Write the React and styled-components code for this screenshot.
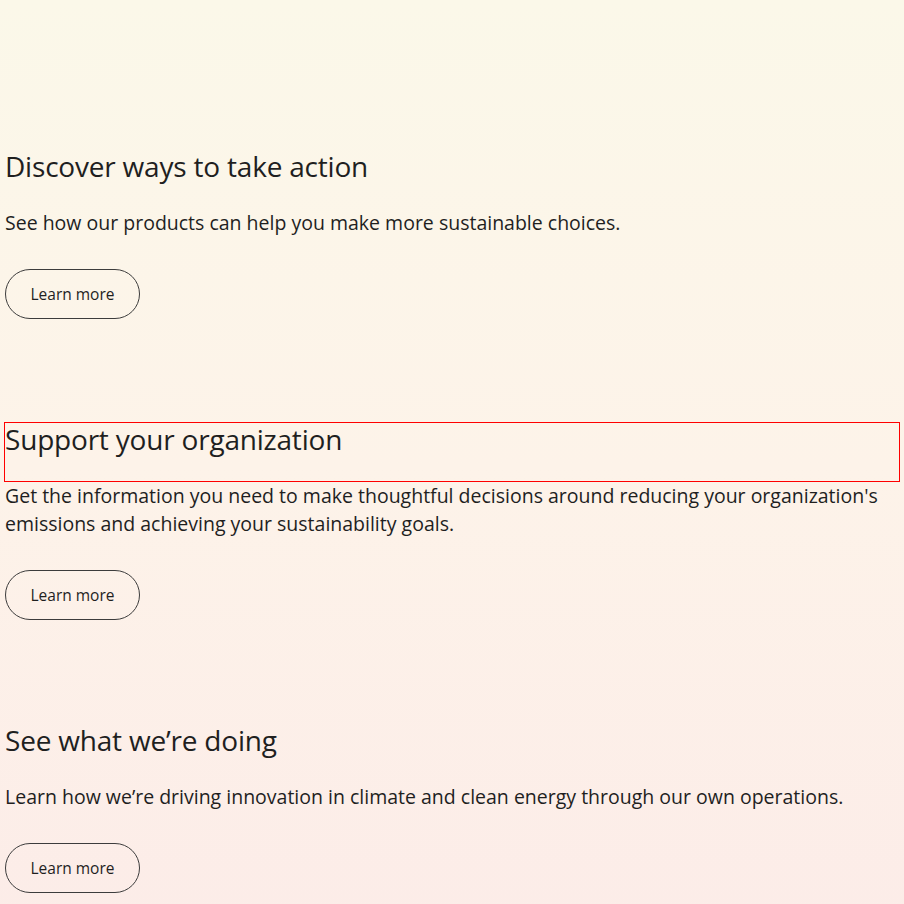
import styled, { createGlobalStyle } from 'styled-components';

const Global = createGlobalStyle`
  html, body {
    margin: 0;
    padding: 0;
  }
  body {
    min-height: 904px;
    background: linear-gradient(180deg, #fbf8e9 0%, #fdf3e9 50%, #fcece8 100%);
    font-family: "Open Sans", "Liberation Sans", sans-serif;
    color: #1f1f1f;
  }
`;

const Page = styled.main`
  display: flex;
  flex-direction: column;
  gap: 103px;
  padding: 149px 4px 40px;
`;

const Section = styled.section`
  display: flex;
  flex-direction: column;
  align-items: flex-start;
`;

const Heading = styled.h2`
  align-self: stretch;
  margin: 0;
  padding: 2px 0 28px 1px;
  font-size: 28px;
  line-height: 30px;
  letter-spacing: -0.2px;
  font-weight: 400;
  color: #1f1f1f;
  outline: ${({ $marked }) => ($marked ? '1px solid #ff0000' : 'none')};
  outline-offset: -1px;
`;

const Text = styled.p`
  margin: 0 0 32px;
  padding-left: 1px;
  font-size: 19.5px;
  line-height: 28px;
  color: #1f1f1f;
`;

const Button = styled.a`
  display: inline-flex;
  align-items: center;
  justify-content: center;
  box-sizing: border-box;
  width: 135px;
  height: 50px;
  margin-left: 1px;
  border: 1px solid #3c3c3c;
  border-radius: 25px;
  font-size: 15.5px;
  color: #1f1f1f;
  text-decoration: none;
`;

const sections = [
  {
    title: 'Discover ways to take action',
    text: 'See how our products can help you make more sustainable choices.',
  },
  {
    title: 'Support your organization',
    text: "Get the information you need to make thoughtful decisions around reducing your organization's emissions and achieving your sustainability goals.",
    marked: true,
  },
  {
    title: 'See what we’re doing',
    text: 'Learn how we’re driving innovation in climate and clean energy through our own operations.',
  },
];

export default function App() {
  return (
    <>
      <Global />
      <Page>
        {sections.map((s) => (
          <Section key={s.title}>
            <Heading $marked={s.marked}>{s.title}</Heading>
            <Text>{s.text}</Text>
            <Button href="#">Learn more</Button>
          </Section>
        ))}
      </Page>
    </>
  );
}
